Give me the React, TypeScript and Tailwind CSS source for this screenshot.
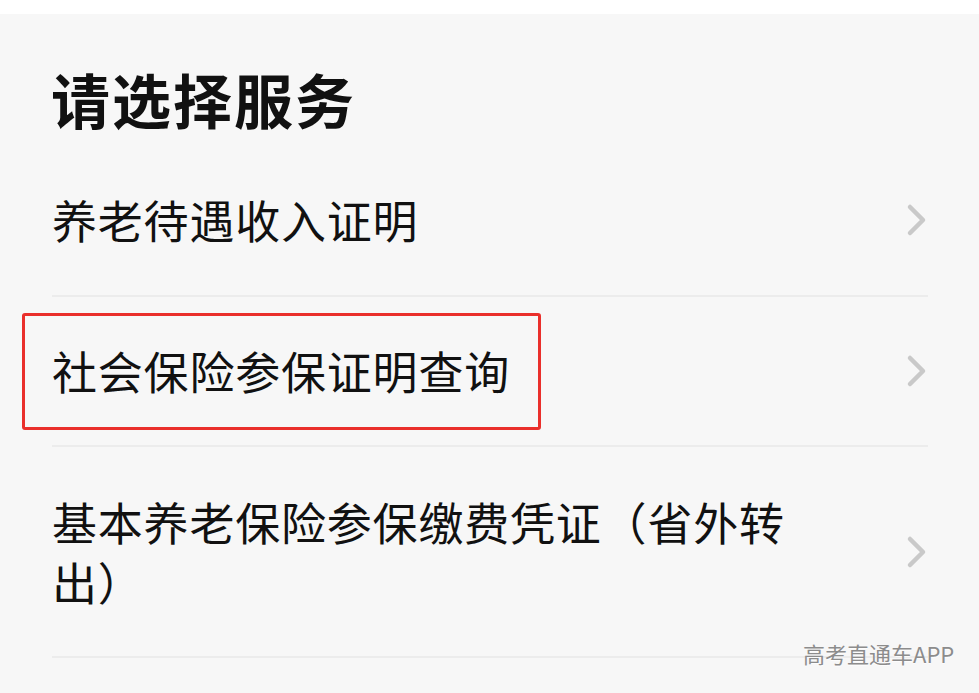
import React from 'react';

const font = { fontFamily: '"Noto Sans CJK SC", "Noto Sans", sans-serif' };

function Chevron() {
  return (
    <svg width="22" height="34" viewBox="0 0 22 34" className="shrink-0">
      <path d="M4 4 L17 17 L4 30" fill="none" stroke="#c9c9c9" strokeWidth="4.5" strokeLinecap="round" strokeLinejoin="round" />
    </svg>
  );
}

export default function App() {
  return (
    <div className="relative w-[979px] h-[693px] overflow-hidden bg-[#f7f7f7] text-[#111]" style={font}>
      <div className="h-[14px] bg-white" />

      <div className="h-[131px] pl-[51px] pt-[50px]">
        <h1 className="text-[59px] leading-[70px] font-bold tracking-[2px]">请选择服务</h1>
      </div>

      <div className="ml-[52px] mr-[51px]">
        <div className="h-[152px] flex items-center justify-between border-b-2 border-[#ececec]">
          <span className="text-[45px] leading-[60px] tracking-[0.8px]">养老待遇收入证明</span>
          <Chevron />
        </div>

        <div className="relative h-[150px] flex items-center justify-between border-b-2 border-[#ececec]">
          <span className="text-[45px] leading-[60px] tracking-[0.8px]">社会保险参保证明查询</span>
          <Chevron />
          <div className="absolute left-[-30px] top-[16px] w-[519px] h-[117px] border-[3px] border-[#ea2f2b] rounded-[3px]" />
        </div>

        <div className="h-[211px] flex items-center justify-between border-b-2 border-[#ececec]">
          <span className="w-[785px] text-[45px] leading-[60px] tracking-[0.8px]">基本养老保险参保缴费凭证（省外转出）</span>
          <Chevron />
        </div>
      </div>

      <div className="absolute left-[803px] top-[639px] text-[22px] leading-[28px] text-[#8c8c8c] [text-shadow:0_1px_1px_rgba(255,255,255,0.9)]">
        高考直通车APP
      </div>
    </div>
  );
}
